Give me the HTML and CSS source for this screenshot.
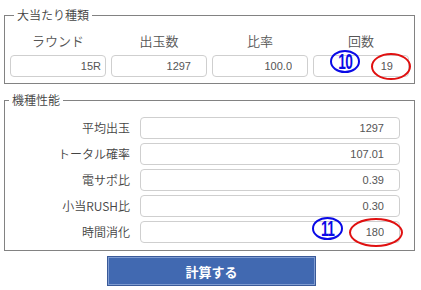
FILE: index.html
```html
<!DOCTYPE html>
<html lang="ja">
<head>
<meta charset="utf-8">
<title>計算</title>
<link rel="stylesheet" href="styles.css">
</head>
<body>
<div class="page">
  <fieldset class="box box-hit">
    <legend>大当たり種類</legend>
    <div class="hit-grid">
      <div class="col-head">ラウンド</div>
      <div class="col-head">出玉数</div>
      <div class="col-head">比率</div>
      <div class="col-head">回数</div>
      <div class="cell"><input class="num num-round" type="text" value="15R" readonly></div>
      <div class="cell"><input class="num" type="text" value="1297" readonly></div>
      <div class="cell"><input class="num" type="text" value="100.0" readonly></div>
      <div class="cell">
        <input class="num" type="text" value="19" readonly>
        <span class="mark mark-10"><span class="mark-text">10</span></span>
        <span class="ring ring-19"></span>
      </div>
    </div>
  </fieldset>

  <fieldset class="box box-spec">
    <legend>機種性能</legend>
    <div class="spec-grid">
      <div class="label">平均出玉</div>
      <div class="cell"><input class="num" type="text" value="1297" readonly></div>
      <div class="label">トータル確率</div>
      <div class="cell"><input class="num" type="text" value="107.01" readonly></div>
      <div class="label">電サポ比</div>
      <div class="cell"><input class="num" type="text" value="0.39" readonly></div>
      <div class="label">小当RUSH比</div>
      <div class="cell"><input class="num" type="text" value="0.30" readonly></div>
      <div class="label">時間消化</div>
      <div class="cell">
        <input class="num" type="text" value="180" readonly>
        <span class="mark mark-11"><span class="mark-text">11</span></span>
        <span class="ring ring-180"></span>
      </div>
    </div>
  </fieldset>

  <div class="actions">
    <button class="calc" type="button">計算する</button>
  </div>
</div>
</body>
</html>
```

FILE: styles.css
```css
* { box-sizing: border-box; }

body {
  margin: 0;
  background: #fff;
  font-family: "Noto Sans CJK JP", "Noto Sans", sans-serif;
  font-weight: 350;
  color: #555;
}

.page {
  padding: 7px 0 0 4px;
}

.box {
  width: 411px;
  margin: 0;
  border: 1px solid #828282;
  padding: 0 5px 6px;
  min-width: 0;
}

.box legend {
  font-size: 12px;
  line-height: 16px;
  padding: 0 3px;
  margin-left: 4px;
  color: #444;
}

.hit-grid {
  display: grid;
  grid-template-columns: repeat(4, 1fr);
  column-gap: 5px;
  row-gap: 5px;
  padding-top: 9px;
}

.col-head {
  text-align: center;
  font-size: 13px;
  line-height: 18px;
  color: #555;
}

.box-spec {
  margin-top: 8px;
  padding: 0 0 7px;
}

.spec-grid {
  display: grid;
  grid-template-columns: 125px 260px;
  column-gap: 10px;
  row-gap: 4px;
  padding-top: 9px;
  align-items: center;
}

.label {
  text-align: right;
  font-size: 12px;
  line-height: 16px;
  color: #444;
}

.cell {
  position: relative;
}

.num {
  display: block;
  width: 100%;
  height: 22px;
  margin: 0;
  border: 1px solid #cfcfcf;
  border-radius: 4px;
  padding: 0 15px 0 4px;
  background: #fff;
  font-family: "Liberation Sans", Arial, sans-serif;
  font-weight: normal;
  font-size: 11px;
  color: #555;
  text-align: right;
  outline: none;
}

.num-round {
  padding-right: 4px;
}

.mark {
  position: absolute;
  display: flex;
  align-items: center;
  justify-content: center;
  border: 2.5px solid #0a0ae6;
  border-radius: 50%;
  color: #0a0ae6;
  overflow: hidden;
}

.mark-text {
  display: block;
  font-family: "Liberation Sans", Arial, sans-serif;
  font-weight: bold;
  font-size: 22px;
  letter-spacing: -1px;
  line-height: 1;
  transform: scaleX(0.62);
}

.mark-10 {
  left: 17px;
  top: -5px;
  width: 30px;
  height: 23px;
}

.mark-11 {
  left: 172px;
  top: -4px;
  width: 31px;
  height: 23px;
}

.ring {
  position: absolute;
  border: 2px solid #e01010;
  border-radius: 50%;
}

.ring-19 {
  left: 58px;
  top: -2px;
  width: 40px;
  height: 27px;
}

.ring-180 {
  left: 209px;
  top: -3px;
  width: 54px;
  height: 29px;
}

.actions {
  width: 411px;
  display: flex;
  justify-content: center;
  padding: 5px 0 0 4px;
}

.calc {
  width: 209px;
  height: 30px;
  margin: 0;
  background: #4169b1;
  border: 1px solid #3a5a98;
  box-shadow: inset 0 0 0 1px #7f9cd2;
  color: #fff;
  font-family: "Noto Sans CJK JP", sans-serif;
  font-weight: bold;
  font-size: 13px;
  cursor: pointer;
}
```
